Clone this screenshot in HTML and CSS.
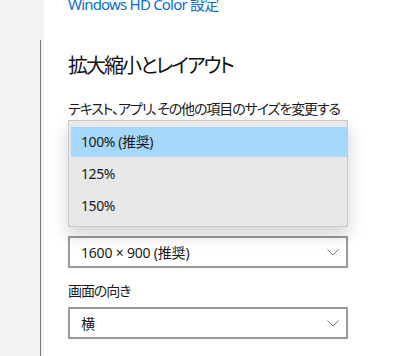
FILE: index.html
```html
<!DOCTYPE html>
<html lang="ja">

<head>
    <meta charset="UTF-8">
    <meta name="viewport" content="width=device-width, initial-scale=1.0">
    <title>ディスプレイ</title>
    <link rel="stylesheet" href="styles.css">
</head>

<body>
    <div class="settings__container">
        <div class="settings__nav">
            <div class="settings__rail"></div>
        </div>
        <div class="settings__main">
            <a class="settings__link" href="#">Windows HD Color 設定</a>

            <h2 class="settings__title">拡大縮小とレイアウト</h2>

            <div class="settings__field settings__field--scale">
                <div class="settings__label">テキスト、アプリ、その他の項目のサイズを変更する</div>
                <div class="settings__select settings__select--hidden"></div>

                <ul class="settings__popup">
                    <li class="settings__option settings__option--active">100% (推奨)</li>
                    <li class="settings__option">125%</li>
                    <li class="settings__option">150%</li>
                </ul>
            </div>

            <div class="settings__field settings__field--resolution">
                <div class="settings__select">
                    <span>1600 × 900 (推奨)</span>
                    <svg class="settings__chevron" width="12" height="7" viewBox="0 0 12 7">
                        <polyline points="0.5,0.5 6,6 11.5,0.5" fill="none" stroke="#7a7a7a" stroke-width="1" />
                    </svg>
                </div>
            </div>

            <div class="settings__field settings__field--orientation">
                <div class="settings__label">画面の向き</div>
                <div class="settings__select">
                    <span>横</span>
                    <svg class="settings__chevron" width="12" height="7" viewBox="0 0 12 7">
                        <polyline points="0.5,0.5 6,6 11.5,0.5" fill="none" stroke="#7a7a7a" stroke-width="1" />
                    </svg>
                </div>
            </div>
        </div>
    </div>
</body>

</html>
```

FILE: styles.css
```css
* {
    box-sizing: border-box;
    margin: 0;
    padding: 0;
}

body {
    font-family: "Noto Sans", "Noto Sans CJK JP", sans-serif;
    font-feature-settings: "palt";
    color: #1a1a1a;
    background-color: #fff;
    overflow: hidden;
}

.settings__container {
    display: flex;
    height: 356px;
}

.settings__nav {
    width: 44px;
    flex-shrink: 0;
    background-color: #f2f2f2;
    display: flex;
    flex-direction: column;
}

.settings__rail {
    width: 1px;
    flex: 1;
    margin: 40px 0 0 40px;
    background-color: #767676;
}

.settings__main {
    flex: 1;
    padding-left: 24px;
}

.settings__link {
    display: block;
    margin-top: -6px;
    font-size: 15px;
    line-height: 20px;
    letter-spacing: -0.8px;
    color: #0a6ed1;
    text-decoration: none;
}

.settings__title {
    font-size: 20px;
    font-weight: normal;
    line-height: 28px;
    letter-spacing: -2px;
    margin-top: 38px;
    color: #111;
}

.settings__field {
    width: 280px;
}

.settings__field--scale {
    position: relative;
    margin-top: 19px;
}

.settings__field--resolution {
    margin-top: 79px;
}

.settings__field--orientation {
    margin-top: 13px;
}

.settings__label {
    font-size: 14px;
    line-height: 20px;
    letter-spacing: -1.1px;
    margin-bottom: 6px;
    white-space: nowrap;
}

.settings__select {
    display: flex;
    justify-content: space-between;
    align-items: center;
    height: 32px;
    padding: 0 7px 0 11px;
    border: 2px solid #999;
    font-size: 14px;
    letter-spacing: -0.2px;
    background-color: #fff;
}

.settings__popup {
    position: absolute;
    top: 21px;
    left: 0;
    width: 280px;
    height: 107px;
    padding: 6px 0 0 1px;
    list-style: none;
    background-color: #e8e8e8;
    border: 1px solid #c9c9c9;
    box-shadow: 0 8px 16px rgba(0, 0, 0, 0.18);
}

.settings__option {
    height: 32px;
    line-height: 30px;
    padding-left: 11px;
    font-size: 14px;
    letter-spacing: -0.4px;
}

.settings__option--active {
    height: 30px;
    margin: 0 0 2px 1px;
    padding-left: 10px;
    background-color: #a6d8fd;
}
```
